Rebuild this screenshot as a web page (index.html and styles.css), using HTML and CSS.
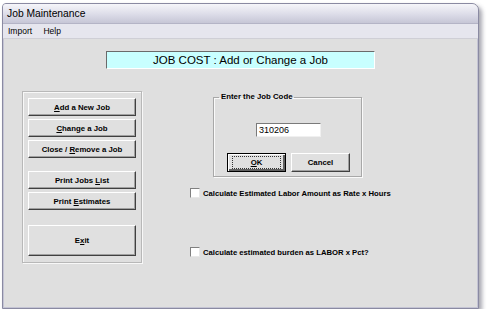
FILE: index.html
```html
<!DOCTYPE html>
<html lang="en">
<head>
<meta charset="UTF-8">
<title>Job Maintenance</title>
<link rel="stylesheet" href="styles.css">
</head>
<body>
    <div class="window">
        <div class="titlebar">Job Maintenance</div>
        <div class="menubar">
            <span class="menu_item">Import</span>
            <span class="menu_item">Help</span>
        </div>
        <div class="content">
            <div class="banner">JOB COST : Add or Change a Job</div>
            <div class="lower">
                <div class="actions">
                    <button class="btn"><u>A</u>dd a New Job</button>
                    <button class="btn"><u>C</u>hange a Job</button>
                    <button class="btn">Close / <u>R</u>emove a Job</button>
                    <button class="btn gap_before">Print Jobs <u>L</u>ist</button>
                    <button class="btn">Print <u>E</u>stimates</button>
                    <button class="btn exit">E<u>x</u>it</button>
                </div>
                <div class="right">
                    <fieldset class="code_box">
                        <legend>Enter the Job Code</legend>
                        <div class="code_row">
                            <div class="code_input">310206</div>
                        </div>
                        <div class="code_buttons">
                            <button class="btn small default"><span class="focus"><u>O</u>K</span></button>
                            <button class="btn small">Cancel</button>
                        </div>
                    </fieldset>
                    <label class="check first">
                        <span class="box"></span>
                        <span>Calculate Estimated Labor Amount as Rate x Hours</span>
                    </label>
                    <label class="check second">
                        <span class="box"></span>
                        <span>Calculate estimated burden as LABOR x Pct?</span>
                    </label>
                </div>
            </div>
        </div>
    </div>
</body>
</html>
```

FILE: styles.css
```css
*{
    margin: 0;
    padding: 0;
    box-sizing: border-box;
}

body{
    background-color: #ffffff;
    padding: 3px 0 0 2px;
    font-family: "Liberation Sans", Arial, sans-serif;
}

.window{
    width: 477px;
    height: 306px;
    display: flex;
    flex-direction: column;
    border: 1px solid #8a8aa2;
    border-radius: 4px 7px 0 0;
    background-color: #dfdfdf;
    box-shadow: 3px 3px 4px rgba(60, 60, 80, 0.45), inset 0 0 0 1px #c4c4d4;
    overflow: hidden;
}

.titlebar{
    height: 19px;
    line-height: 19px;
    padding-left: 4px;
    font-size: 10.3px;
    color: #000;
    background: linear-gradient(#f6f6fa, #dcdce8 55%, #c6c6d6);
}

.menubar{
    height: 15px;
    line-height: 14px;
    padding-left: 5px;
    font-size: 8.5px;
    background-color: #e6e6ee;
    border-top: 1px solid #b4b4c6;
}

.menu_item{
    margin-right: 9px;
}

.content{
    flex: 1;
    padding-top: 12px;
    border-top: 1px solid #cfcfd6;
}

.banner{
    margin-left: 103px;
    width: 269px;
    height: 18px;
    line-height: 16px;
    text-align: center;
    font-size: 11.5px;
    background-color: #c8ffff;
    border: 1px solid;
    border-color: #6a6a6a #ffffff #ffffff #6a6a6a;
}

.lower{
    display: flex;
    margin-top: 22px;
}

.actions{
    margin-left: 19px;
    width: 120px;
    height: 172px;
    padding: 6px 5px 0 5px;
    display: flex;
    flex-direction: column;
    gap: 3px;
    border: 1px solid #b8b8b8;
    box-shadow: inset 1px 1px 0 #f8f8f8, 1px 1px 0 #f8f8f8;
}

.btn{
    height: 18px;
    font-family: "Liberation Sans", Arial, sans-serif;
    font-size: 7.8px;
    font-weight: bold;
    color: #000;
    background-color: #e0e0e0;
    border: 1px solid;
    border-color: #ffffff #404040 #404040 #ffffff;
    box-shadow: inset -1px -1px 0 #a0a0a0;
}

.gap_before{
    margin-top: 10px;
}

.exit{
    margin-top: 12px;
    height: 31px;
}

.right{
    margin-left: 48px;
    display: flex;
    flex-direction: column;
    align-items: flex-start;
}

.code_box{
    margin: 1px 0 0 23px;
    width: 149px;
    padding: 0 11px 4px 13px;
    min-width: 0;
    border: 1px solid #a8a8a8;
    box-shadow: inset 1px 1px 0 #fafafa, 1px 1px 0 #fafafa;
}

.code_box legend{
    margin-left: -8px;
    padding: 0 2px;
    font-size: 7.8px;
    font-weight: bold;
    line-height: 10px;
}

.code_row{
    display: flex;
    justify-content: center;
    margin-top: 21px;
}

.code_input{
    width: 65px;
    height: 14px;
    line-height: 12px;
    padding-left: 2px;
    font-size: 9px;
    background-color: #ffffff;
    border: 1px solid;
    border-color: #7a7a7a #f0f0f0 #f0f0f0 #7a7a7a;
}

.code_buttons{
    display: flex;
    gap: 5px;
    margin-top: 16px;
}

.small{
    width: 60px;
    height: 19px;
}

.default{
    border: 1px solid #000;
    box-shadow: inset 1px 1px 0 #fff, inset -2px -2px 0 #606060;
    padding: 2px;
}

.default .focus{
    display: block;
    height: 13px;
    line-height: 11px;
    border: 1px dotted #333;
    margin: 0 2px;
}

.check{
    display: flex;
    align-items: center;
    gap: 3px;
    font-size: 7.7px;
    font-weight: bold;
}

.check.first{
    margin-top: 11px;
}

.check.second{
    margin-top: 49px;
}

.check .box{
    width: 10px;
    height: 10px;
    background-color: #ffffff;
    border: 1px solid;
    border-color: #808080 #e8e8e8 #e8e8e8 #808080;
}
```
